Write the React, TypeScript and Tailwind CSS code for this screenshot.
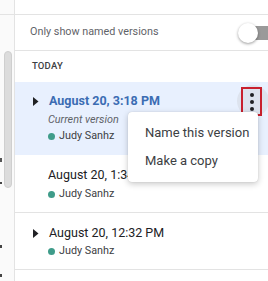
import React from "react";

function Dot() {
  return <span className="inline-block w-[7px] h-[7px] rounded-full bg-[#3f9c8a] mr-[4px]" />;
}

function Tri() {
  return (
    <svg width="6" height="9" viewBox="0 0 6 9" className="mr-[10px] ml-[1px]">
      <path d="M0 0 L5.5 4.5 L0 9 Z" fill="#202124" />
    </svg>
  );
}

export default function App() {
  return (
    <div
      className="w-[268px] h-[281px] overflow-hidden bg-white flex"
      style={{ fontFamily: "Roboto, 'Liberation Sans', sans-serif" }}
    >
      {/* left document strip */}
      <div className="relative w-[15px] shrink-0 border-r border-[#e3e3e3] bg-[#fafafa] flex flex-col">
        <div className="h-[15px] border-b border-[#e3e3e3] shrink-0" />
        <div className="mt-[36px] ml-[4px] w-[8px] h-[137px] rounded-[4px] bg-[#dcdcdc] border border-[#cfcfcf]" />
        <div className="absolute left-0 top-[158px] w-[2px] h-[4px] bg-[#555]" />
        <div className="absolute left-0 top-[182px] w-[2px] h-[2px] bg-[#444]" />
        <div className="absolute left-0 top-[245px] w-[2px] h-[3px] bg-[#444]" />
        <div className="absolute left-0 top-[274px] w-[2px] h-[3px] bg-[#444]" />
      </div>

      {/* right panel */}
      <div className="relative flex-1 flex flex-col overflow-hidden">
        <div className="h-[15px] border-b border-[#e3e3e3] shrink-0" />
        <div className="h-[36px] shrink-0 border-b border-[#e3e3e3] flex items-center pl-[15px]">
          <span className="text-[10.8px] text-[#5f6368]">Only show named versions</span>
          <div className="relative ml-auto w-[30px] h-[22px] flex items-center">
            <div className="absolute left-[8px] w-[30px] h-[14px] rounded-full bg-[#9a9a9a]" />
            <div className="relative w-[20px] h-[20px] rounded-full bg-white shadow-[0_1px_3px_rgba(0,0,0,0.4)]" />
          </div>
        </div>
        <div className="h-[31px] shrink-0 flex items-center pl-[17px]">
          <span className="text-[9.5px] font-medium text-[#3c4043] tracking-[0.2px]">TODAY</span>
        </div>

        {/* row 1 selected */}
        <div className="relative bg-[#e8f0fe] pt-[10px] pb-[11px] pl-[17px] shrink-0">
          <div className="flex items-center h-[18px]">
            <Tri />
            <span className="text-[12.5px] font-bold text-[#3b6cb3]">August 20, 3:18 PM</span>
          </div>
          <div className="mt-[2px] pl-[16px] leading-[16px] text-[10.8px] italic text-[#5f6368]">
            Current version
          </div>
          <div className="pl-[16px] leading-[16px] flex items-center text-[10.8px] text-[#3c4043]">
            <Dot />
            Judy Sanhz
          </div>
          <div className="absolute left-[222px] top-[3px] w-[32px] h-[32px] rounded-full bg-[#dde3ee]" />
          <div className="absolute left-[226px] top-[5px] w-[21px] h-[29px] border-2 border-[#c8202e] flex flex-col items-center justify-center gap-[3px]">
            <span className="w-[4px] h-[4px] rounded-full bg-[#202124]" />
            <span className="w-[4px] h-[4px] rounded-full bg-[#202124]" />
            <span className="w-[4px] h-[4px] rounded-full bg-[#202124]" />
          </div>
        </div>

        {/* row 2 */}
        <div className="pt-[11px] pb-[10px] pl-[33px] border-b border-[#e3e3e3] shrink-0">
          <div className="h-[18px] flex items-center text-[12.5px] text-[#202124]">August 20, 1:34 PM</div>
          <div className="mt-[2px] leading-[16px] flex items-center text-[10.8px] text-[#3c4043]">
            <Dot />
            Judy Sanhz
          </div>
        </div>

        {/* row 3 */}
        <div className="pt-[11px] pb-[10px] pl-[17px] border-b border-[#e3e3e3] shrink-0">
          <div className="flex items-center h-[18px]">
            <Tri />
            <span className="text-[12.5px] text-[#202124]">August 20, 12:32 PM</span>
          </div>
          <div className="mt-[1px] pl-[16px] leading-[16px] flex items-center text-[10.8px] text-[#3c4043]">
            <Dot />
            Judy Sanhz
          </div>
        </div>

        {/* menu */}
        <div className="absolute left-[113px] top-[112px] w-[130px] h-[70px] bg-white rounded-[4px] shadow-[0_2px_6px_rgba(0,0,0,0.22),0_0_1px_rgba(0,0,0,0.2)] py-[7px] flex flex-col">
          <div className="h-[28px] flex items-center pl-[17px] text-[13px] text-[#3c4043]">Name this version</div>
          <div className="h-[28px] flex items-center pl-[17px] text-[13px] text-[#3c4043]">Make a copy</div>
        </div>
      </div>
    </div>
  );
}
